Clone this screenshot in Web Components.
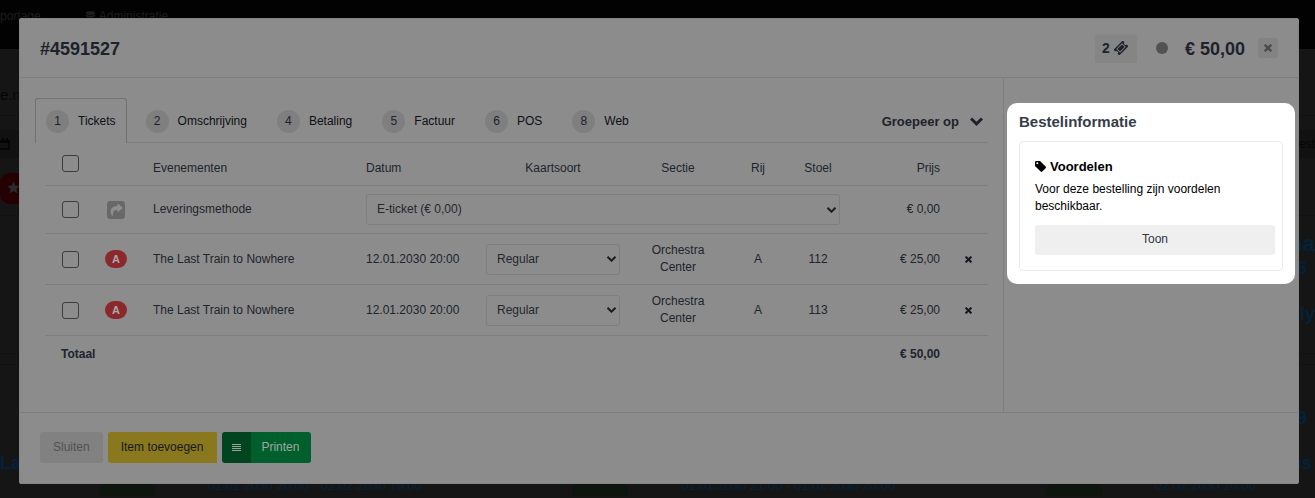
<!DOCTYPE html>
<html lang="nl">
<head>
<meta charset="utf-8">
<title>Bestelling #4591527</title>
<style>
  html { height: 100%; }
  body {
    margin: 0; min-height: 100%; background: #151515; color: #1d222b;
    font: 12px/17px "Liberation Sans", Arial, sans-serif;
    --surface: #8c8c8c; --line: #7e7e7e; --soft: #838383; --ink: #1d222b;
  }
</style>
</head>
<body>
<order-stage>
  <page-behind slot="page"></page-behind>
  <order-dialog>
    <order-header slot="header" number="#4591527" count="2" total="€ 50,00"></order-header>
    <order-tabs slot="main"></order-tabs>
    <ticket-table slot="main"></ticket-table>
    <info-panel slot="aside" heading="Bestelinformatie">
      <benefit-card heading="Voordelen" action="Toon">Voor deze bestelling zijn voordelen beschikbaar.</benefit-card>
    </info-panel>
    <order-actions slot="footer"></order-actions>
  </order-dialog>
</order-stage>

<script>
const define = (name, render) => customElements.define(name, class extends HTMLElement {
  connectedCallback() {
    if (this.shadowRoot) return;
    const root = this.attachShadow({ mode: 'open' });
    const t = document.createElement('template');
    t.innerHTML = '<style>*{box-sizing:border-box}button{font:inherit;color:inherit;border:0;margin:0;padding:0;background:none}svg{display:block}</style>' + render(this);
    root.append(t.content.cloneNode(true));
  }
});

define('order-stage', () => `
<style>
  :host { display: flex; position: relative; min-height: 100vh; box-sizing: border-box; padding: 18px 16px 14px 19px; overflow: hidden; }
  ::slotted([slot=page]) { position: absolute; inset: 0; }
  ::slotted(order-dialog) { position: relative; flex: 1; min-width: 0; }
</style>
<slot name="page"></slot><slot></slot>`);

define('page-behind', () => `
<style>
  :host { display: block; overflow: hidden; color: #050505; white-space: nowrap; }
  nav { height: 49px; background: #020202; color: #1d1d1d; display: flex; gap: 45px; }
  nav span { display: flex; align-items: center; gap: 4px; height: 32px; }
  .row { display: flex; justify-content: space-between; border-bottom: 1px solid #111; }
  .site { height: 67px; font-size: 15px; line-height: 92px; }
  .filter { height: 100px; padding-top: 14px; flex-wrap: wrap; align-content: flex-start; }
  .filter > div { flex: 0 0 100%; height: 28px; background: #111; display: flex; justify-content: space-between; align-items: center; }
  .pill { background: #240003; width: 34px; height: 31px; margin-top: 15px; padding: 8px 0 0 7px; border-radius: 10px 0 0 10px; }
  .blue { color: #03223a; font-weight: bold; font-size: 18px; }
  .event { height: 138px; justify-content: flex-end; text-align: right; line-height: 20px; padding-top: 14px; }
  .event b { display: block; }
  .event .big { font-size: 22px; line-height: 28px; }
  .event .num, .second .num { padding-right: 8px; }
  .event .next { padding-top: 26px; }
  .gap { height: 11px; }
  .second { height: 112px; padding-top: 43px; line-height: 20px; border: 0; }
  .second .left { padding-top: 45px; }
  .second b { display: block; }
  .second .right { text-align: right; }
  .second .word { padding: 25px 3px 0 0; }
  .dates { display: grid; grid-template-columns: repeat(3, 36vw); padding-left: 99px; color: #03223a; font-size: 13px; }
  .dates div { display: flex; gap: 53px; align-items: flex-start; }
  .dates i { width: 56px; height: 12px; margin-top: 7px; background: #0c160f; border-radius: 6px 6px 0 0; }
</style>
<nav><span>portage</span><span><svg width="9" height="11" viewBox="0 0 9 11" fill="#1d1d1d"><ellipse cx="4.500" cy="2" rx="4.500" ry="2"/><path d="M0 3.500q4.500 2.500 9 0v2q-4.500 2.500-9 0zM0 7q4.500 2.500 9 0v2q-4.500 3-9 0z"/></svg>Administratie</span></nav>
<div class="row site"><span>e.nl</span></div>
<div class="row filter">
  <div><svg width="10" height="12" viewBox="0 0 10 12" fill="none" stroke="#030303" stroke-width="1.500"><path d="M0 3h9v8H0M0 4h9M3 0v3M7 0v3"/></svg><span>est</span></div>
  <span class="pill"><svg width="13" height="13" viewBox="0 0 24 24" fill="#2b2b2b"><path d="M12 1l3.300 7.500 8.200.8-6.200 5.400 1.900 8L12 18.500 4.800 22.700l1.900-8L.5 9.300l8.200-.8z"/></svg></span>
</div>
<div class="row event blue"><div><b class="big">na</b><b class="num">6</b><b class="next">kly</b></div></div>
<div class="row gap"></div>
<div class="row second blue"><b class="left">Las</b><div class="right"><b class="num">9</b><b class="word">ns</b></div></div>
<div class="dates">
  <div><i></i><span>01.02.2030 20:00 - 02.02.2030 19:00</span></div>
  <div><i></i><span>01.01.2030 21:00 - 01.02.2030 20:00</span></div>
  <div><i></i><span>02.02.2030 20:00</span></div>
</div>`);

define('order-dialog', () => `
<style>
  :host { display: flex; flex-direction: column; background: var(--surface); border: 1px solid #868686; border-radius: 2px; box-sizing: border-box; }
  .body { flex: 1; display: grid; grid-template-columns: minmax(0, 1fr) 295px; }
  main { padding: 20px 15px 24px; min-width: 0; }
  aside { border-left: 1px solid var(--line); padding: 25px 3px; }
  footer { border-top: 1px solid var(--line); padding: 19px 20px 20px; }
  header { border-bottom: 1px solid var(--line); }
</style>
<header><slot name="header"></slot></header>
<div class="body"><main><slot name="main"></slot></main><aside><slot name="aside"></slot></aside></div>
<footer><slot name="footer"></slot></footer>`);

define('order-header', el => `
<style>
  :host { display: flex; align-items: center; height: 58px; padding: 0 20px; }
  h1, strong { font-size: 18px; line-height: 22px; font-weight: bold; margin: 0; padding-top: 2px; }
  h1 { flex: 1; }
  .count { display: flex; align-items: center; justify-content: center; gap: 4px; width: 42px; height: 29px; padding-right: 2px; border-radius: 3px; background: #858585; font-size: 14px; font-weight: bold; }
  .dot { width: 12px; height: 12px; border-radius: 50%; background: #525252; margin: 0 17px 0 19px; }
  button { width: 20px; height: 20px; margin-left: 13px; border-radius: 3px; background: var(--soft); display: grid; place-items: center; }
</style>
<h1>${el.getAttribute('number')}</h1>
<span class="count">${el.getAttribute('count')}
<svg width="14" height="14" viewBox="0 0 14 14"><g transform="rotate(-45 7 7)"><path fill="#1d222b" fill-rule="evenodd" d="M.5 3h13v2.400a1.600 1.600 0 0 0 0 3.200V11H.5V8.600a1.600 1.600 0 0 0 0-3.200zM3 4.300v5.400h8V4.300z"/><path fill="#1d222b" d="M3.800 5.100h6.400v3.800H3.800z"/></g></svg></span>
<span class="dot"></span>
<strong>${el.getAttribute('total')}</strong>
<button type="button" aria-label="Venster sluiten"><svg width="8" height="8" viewBox="0 0 8 8" stroke="#484b50" stroke-width="2.500"><path d="M.7.700l6.600 6.600M7.300.700L.7 7.300"/></svg></button>`);

const tabs = [[1, 'Tickets'], [2, 'Omschrijving'], [4, 'Betaling'], [5, 'Factuur'], [6, 'POS'], [8, 'Web']];
define('order-tabs', () => `
<style>
  :host { display: flex; justify-content: space-between; border-bottom: 1px solid var(--line); height: 45px; box-sizing: border-box; color: #0d1015; }
  [role=tablist] { display: flex; gap: 8px; }
  [role=tab] { display: flex; align-items: center; gap: 9px; height: 45px; padding: 0 10px; border: 1px solid transparent; border-bottom: 0; border-radius: 3px 3px 0 0; }
  [aria-selected=true] { background: var(--surface); border-color: #727272; }
  .n { width: 23px; height: 23px; border-radius: 50%; background: #7f7f7f; line-height: 22px; text-align: center; color: #1d222b; }
  .group { display: flex; align-items: center; gap: 11px; padding: 3px 5px 0 0; font-size: 13px; font-weight: bold; color: var(--ink); }
</style>
<div role="tablist">${tabs.map(([n, t], i) => `<button type="button" role="tab" aria-selected="${i === 0}"><span class="n">${n}</span>${t}</button>`).join('')}</div>
<button type="button" class="group">Groepeer op<svg width="13" height="9" viewBox="0 0 13 9" fill="none" stroke="#1d222b" stroke-width="3"><path d="M1 1.500l5.500 5.400L12 1.500"/></svg></button>`);

define('select-box', el => `
<style>
  :host { display: grid; align-items: center; text-align: left; }
  select { grid-area: 1/1; appearance: none; width: 100%; height: 31px; padding: 0 10px; border: 1px solid var(--line); border-radius: 3px; background: transparent; color: #24272d; font: inherit; }
  svg { grid-area: 1/1; justify-self: end; margin-right: 4px; pointer-events: none; }
</style>
<select aria-label="${el.getAttribute('label')}"><option>${el.getAttribute('value')}</option></select>
<svg width="9" height="6" viewBox="0 0 9 6" fill="none" stroke="#1b1d20" stroke-width="2"><path d="M.5.800l4 3.900 4-3.900"/></svg>`);

const check = label => `<input type="checkbox" aria-label="${label}">`;
const ticket = seat => `<tr class="seat">
  <td class="c">${check('Stoel ' + seat)}</td><td class="m"><span class="badge">A</span></td><td>The Last Train to Nowhere</td><td>12.01.2030 20:00</td>
  <td><select-box label="Kaartsoort" value="Regular"></select-box></td><td class="m">Orchestra Center</td><td class="m">A</td><td class="m">${seat}</td><td class="r">€ 25,00</td>
  <td class="m"><button type="button" aria-label="Verwijderen"><svg width="7" height="7" viewBox="0 0 6 6" stroke="#14181f" stroke-width="1.700"><path d="M.5.500l5 5M5.500.500l-5 5"/></svg></button></td></tr>`;
define('ticket-table', () => `
<style>
  :host { display: block; padding-left: 10px; }
  table { width: 100%; border-collapse: separate; border-spacing: 0; table-layout: fixed; }
  th, td { padding: 0 8px; text-align: left; font-weight: normal; border-bottom: 1px solid var(--line); color: #20242c; }
  .m { text-align: center; } .r { text-align: right; } .c { padding: 0 0 0 17px; }
  thead tr { height: 43px; } thead th { padding-top: 8px; } thead .c { padding: 0 0 2px 17px; }
  .delivery { height: 48px; } .seat { height: 51px; }
  tfoot td { border: 0; font-weight: bold; height: 36px; } tfoot td:first-child { padding-left: 16px; }
  input { appearance: none; display: block; width: 17px; height: 17px; margin: 0; border: 1px solid #3c3c3c; border-radius: 3px; }
  .badge { display: inline-block; width: 22px; height: 18px; border-radius: 9px; background: #8b282c; color: #a9a9a9; font-size: 11px; line-height: 19px; font-weight: bold; vertical-align: middle; }
  .share { margin: 0 auto; } td button { display: inline-block; padding: 4px; vertical-align: middle; }
</style>
<table>
<colgroup><col style="width:42px"><col style="width:58px"><col><col style="width:120px"><col style="width:150px"><col style="width:100px"><col style="width:60px"><col style="width:60px"><col style="width:100px"><col style="width:40px"></colgroup>
<thead><tr><th class="c">${check('Alles selecteren')}</th><th></th><th>Evenementen</th><th>Datum</th><th class="m">Kaartsoort</th><th class="m">Sectie</th><th class="m">Rij</th><th class="m">Stoel</th><th class="r">Prijs</th><th></th></tr></thead>
<tbody>
<tr class="delivery"><td class="c">${check('Leveringsmethode')}</td><td><svg class="share" width="18" height="18" viewBox="0 0 18 18"><rect width="18" height="18" rx="3.500" fill="#686868"/><path fill="#8e8e8e" d="M10.500 2.200l5.500 4.700-5.500 4.700V8.900C7 8.700 5.500 10.500 6 15.500 2 12 2.500 4.900 10.500 4.900z"/></svg></td><td>Leveringsmethode</td><td colspan="5"><select-box label="Leveringsmethode" value="E-ticket (€ 0,00)"></select-box></td><td class="r">€ 0,00</td><td></td></tr>
${ticket(112)}${ticket(113)}
</tbody>
<tfoot><tr><td colspan="8">Totaal</td><td class="r">€ 50,00</td><td></td></tr></tfoot>
</table>`);

define('info-panel', el => `
<style>
  :host { display: block; background: #fff; border-radius: 10px; padding: 9px 12px 13px; }
  h2 { margin: 0 0 9px; font-size: 15px; line-height: 20px; color: #363d49; }
</style>
<h2>${el.getAttribute('heading')}</h2><slot></slot>`);

define('benefit-card', el => `
<style>
  :host { display: block; border: 1px solid #ebebeb; border-radius: 4px; padding: 16px 7px 15px 15px; color: #000; }
  h3 { display: flex; align-items: center; gap: 4px; margin: 0 0 6px; font-size: 13px; line-height: 17px; }
  p { margin: 0 0 10px; max-width: 220px; }
  button { width: 100%; height: 30px; padding-bottom: 2px; border-radius: 3px; background: #efefef; color: #30353f; }
</style>
<h3><svg width="11" height="12" viewBox="0 0 11 12"><path fill-rule="evenodd" d="M0 1.200V5l5.600 5.600q.9.800 1.700 0l3.300-3.300q.8-.9 0-1.700L5 0H1.200Q0 0 0 1.200zM2.300 1.300a1 1 0 1 1 0 2 1 1 0 0 1 0-2z"/></svg>${el.getAttribute('heading')}</h3>
<p><slot></slot></p><button type="button">${el.getAttribute('action')}</button>`);

define('order-actions', () => `
<style>
  :host { display: flex; gap: 5px; }
  button { height: 31px; padding: 0 13px; border-radius: 3px; }
  .close { background: #818181; color: #515151; }
  .add { background: #8a781f; color: #15181c; border-radius: 3px 0 0 3px; padding-right: 14px; }
  .print { display: flex; }
  .print button { background: #005f2d; color: #a0a8a2; border-radius: 0 3px 3px 0; padding: 0 12px 0 10px; }
  .print .menu { background: #004520; padding: 0 10px; border-radius: 3px 0 0 3px; }
</style>
<button type="button" class="close" disabled>Sluiten</button>
<button type="button" class="add">Item toevoegen</button>
<div class="print"><button type="button" class="menu" aria-label="Printopties"><svg width="9" height="8" viewBox="0 0 9 8" stroke="#9aa49d"><path d="M0 .500h9M0 2.500h9M0 4.500h9M0 6.500h9"/></svg></button><button type="button">Printen</button></div>`);
</script>
</body>
</html>
